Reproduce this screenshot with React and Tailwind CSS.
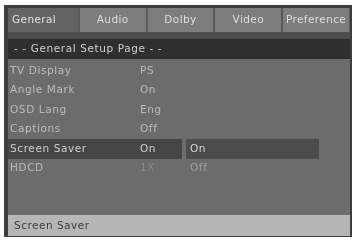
import React from "react";

const tabs = ["General", "Audio", "Dolby", "Video", "Preference"];

const rows = [
    { label: "TV Display", value: "PS" },
    { label: "Angle Mark", value: "On" },
    { label: "OSD Lang", value: "Eng" },
    { label: "Captions", value: "Off" },
    { label: "Screen Saver", value: "On", selected: true, option: "On" },
    { label: "HDCD", value: "1X", dim: true, option: "Off" },
];

export default function App() {
    return (
        <div className="w-[354px] h-[240px] bg-white pt-[5px] pl-[4px] pr-[2px] pb-[3px]" style={{ fontFamily: "'DejaVu Sans', sans-serif" }}>
            <div className="h-full flex flex-col bg-[#6c6c6c] border-l-[4px] border-t-[3px] border-r-[2px] border-b-[1px] border-[#3e3e3e] blur-[0.5px]">
                <div className="flex h-[24px] bg-[#5a5a5a] gap-[2px] pr-[1px]">
                    {tabs.map((t, i) => (
                        <div key={t} className={"flex-1 flex items-center text-[10.5px] tracking-[0.4px] " + (i == 0 ? "bg-[#636363] text-[#e0e0e0] pl-[4px]" : "bg-[#7d7d7d] text-[#dedede] justify-center")}>{t}</div>
                    ))}
                </div>
                <div className="h-[7px] bg-[#4e4e4e]"></div>
                <div className="h-[20px] bg-[#2f2f2f] flex items-center pl-[6px] text-[10.5px] tracking-[0.6px] text-[#d0d0d0]">- - General Setup Page - -</div>
                <div className="flex flex-col pt-[2px]">
                    {rows.map(r => (
                        <div key={r.label} className="flex h-[19.5px] items-center">
                            <div className={"w-[174px] h-full flex items-center text-[10.5px] tracking-[0.6px] pl-[2px] " + (r.selected ? "bg-[#464646] text-[#d0d0d0]" : "text-[#bcbcbc]")}>
                                <span className="w-[130px]">{r.label}</span>
                                <span className={r.dim ? "text-[#8a8a8a]" : ""}>{r.value}</span>
                            </div>
                            {r.option && (
                                <div className={"ml-[4px] w-[133px] h-full flex items-center pl-[4px] text-[10.5px] tracking-[0.6px] " + (r.selected ? "bg-[#4c4c4c] text-[#d6d6d6]" : "text-[#a0a0a0]")}>{r.option}</div>
                            )}
                        </div>
                    ))}
                </div>
                <div className="flex-1"></div>
                <div className="h-[21px] bg-[#b6b6b6] flex items-center pl-[6px] text-[10.5px] tracking-[0.5px] text-[#3a3a3a]">Screen Saver</div>
            </div>
        </div>
    );
}
